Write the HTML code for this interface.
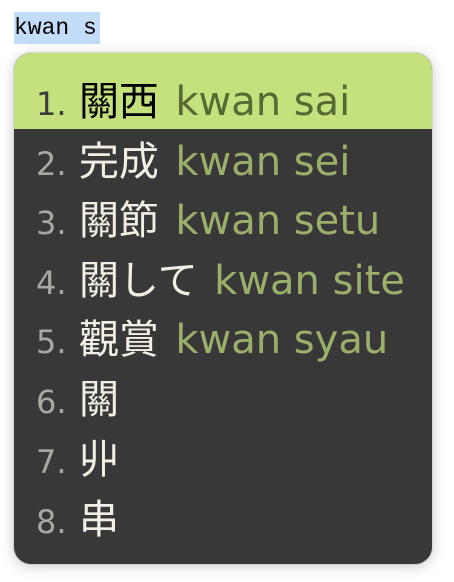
<!DOCTYPE html>
<html><head><meta charset="utf-8"><style>
html,body{margin:0;padding:0;background:#fff;width:454px;height:582px;overflow:hidden}
.inp{position:absolute;left:14px;top:12px;height:32px;width:86px;background:#c3dcf7;font:23px "Liberation Mono",monospace;line-height:32px;color:#000;}
.panel{position:absolute;left:14px;top:53px;width:418px;height:511px;background:#383838;border-radius:17px;overflow:hidden;box-shadow:0 2px 14px rgba(0,0,0,.22),0 0 0 1px rgba(0,0,0,.08)}
.hl{position:absolute;left:0;top:0;width:418px;height:76px;background:#c5e17e}
.row{position:absolute;left:22px;height:60px;line-height:60px;font-size:39px;white-space:nowrap;font-family:"DejaVu Sans","Noto Sans CJK JP",sans-serif}
.n{color:#a8a8a2;font-size:32px}
.k{color:#f4efe5;font-family:"Noto Sans CJK JP",sans-serif;font-size:40px}
.r{color:#9bae6a;font-size:40px;margin-left:4px}
.sel .n{color:#3b3b3b}.sel .k{color:#000}.sel .r{color:#586934}
</style></head><body>
<div class="inp">kwan s</div>
<div class="panel">
<div class="hl"></div>
<div class="row sel" style="top:15px"><span class="n">1.</span> <span class="k">關西</span> <span class="r">kwan sai</span></div>
<div class="row" style="top:75px"><span class="n">2.</span> <span class="k">完成</span> <span class="r">kwan sei</span></div>
<div class="row" style="top:134px"><span class="n">3.</span> <span class="k">關節</span> <span class="r">kwan setu</span></div>
<div class="row" style="top:194px"><span class="n">4.</span> <span class="k">關して</span> <span class="r">kwan site</span></div>
<div class="row" style="top:253px"><span class="n">5.</span> <span class="k">觀賞</span> <span class="r">kwan syau</span></div>
<div class="row" style="top:313px"><span class="n">6.</span> <span class="k">關</span></div>
<div class="row" style="top:373px"><span class="n">7.</span> <span class="k">丱</span></div>
<div class="row" style="top:433px"><span class="n">8.</span> <span class="k">串</span></div>
</div>
</body></html>
